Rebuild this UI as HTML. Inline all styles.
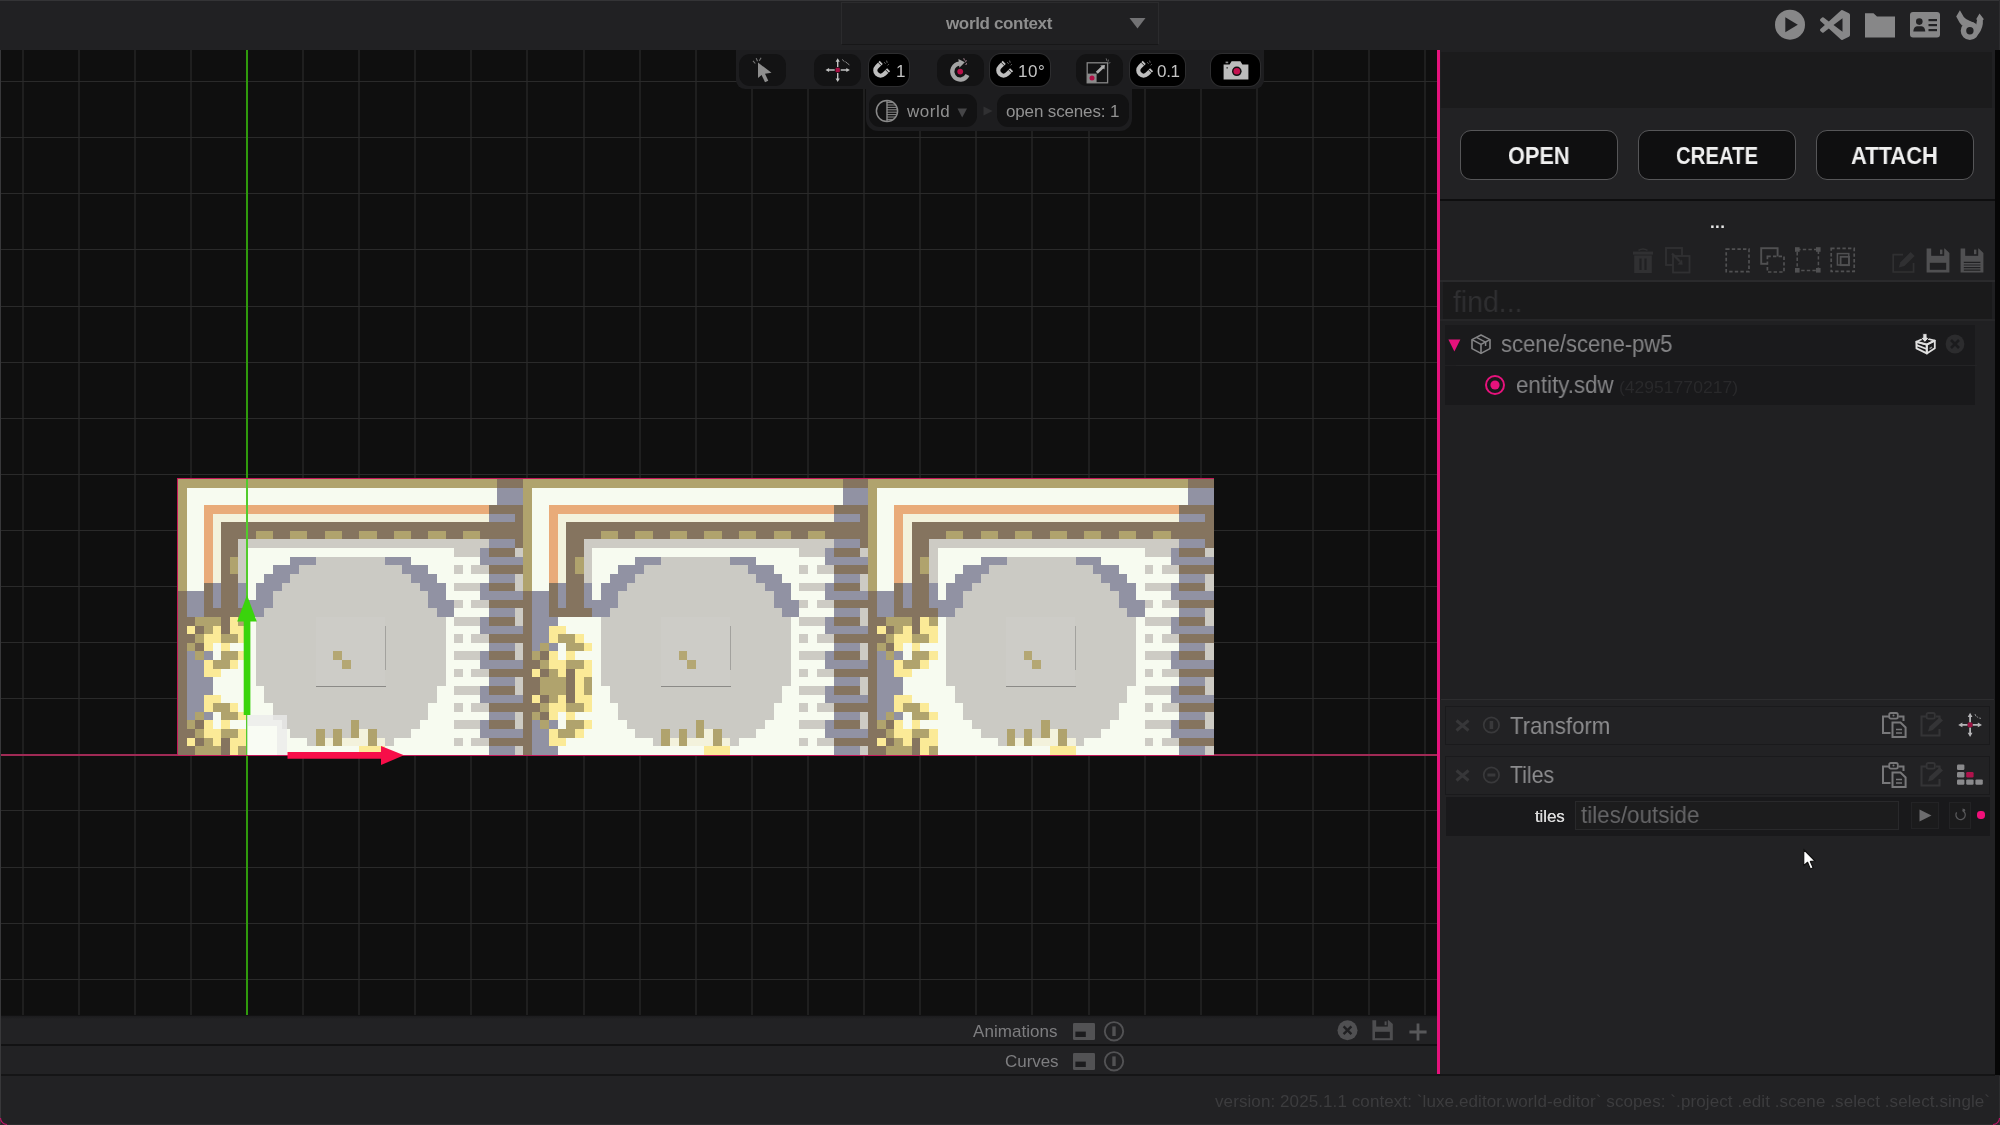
<!DOCTYPE html>
<html><head><meta charset="utf-8"><title>world editor</title>
<style>
html,body{margin:0;padding:0}
body{width:2000px;height:1125px;overflow:hidden;background:#202022;position:relative;
 font-family:"Liberation Sans",sans-serif;color:#8c8c8c}
.a{position:absolute}
.t{position:absolute;white-space:nowrap;line-height:1;will-change:transform}
svg{position:absolute;overflow:visible}
#top{left:0;top:0;width:2000px;height:50px;background:#212123;border-top:1px solid #343436;box-sizing:border-box}
#vp{left:0;top:50px;width:1437px;height:965px;background:#0f0f0f;overflow:hidden}
#vp .gv{position:absolute;top:0;width:2px;height:965px;background:#1f1f1f}
#vp .gh{position:absolute;left:0;height:1px;width:1437px;background:#2a2a2a}
.tb{position:absolute;top:54px;height:32px;border-radius:11px;background:#131314}
.tb.k{background:#000;box-shadow:0 0 0 1px #2d2d2f}
.pill{position:absolute;top:94px;height:33px;border-radius:11px;background:#121213}
.btn{position:absolute;top:130px;height:50px;width:158px;box-sizing:border-box;border:1px solid #565658;border-radius:11px;background:#0f0f10;
 color:#f2f2f2;font-weight:bold;font-size:22px;text-align:center;line-height:49px;letter-spacing:-0.2px}
.hdr{position:absolute;left:1445px;width:545px;height:39px;background:#222224;box-sizing:border-box;border:1px solid #1a1a1c}

</style></head>
<body>
<div id="top" class="a"></div>
<div class="a" style="left:841px;top:2px;width:318px;height:43px;box-sizing:border-box;border:1px solid #2b2b2d;border-bottom-color:#171718;background:#202022"></div>
<div class="t" style="left:946px;top:15px;font-size:17px;color:#8e8e8e;font-weight:bold;letter-spacing:-0.35px">world context</div>
<svg style="left:1129px;top:18px" width="17" height="11" viewBox="0 0 17 11"><path d="M0.5 0H16.5L8.5 10.5Z" fill="#727274"/></svg>
<svg style="left:1774px;top:9px" width="32" height="32" viewBox="0 0 32 32" ><circle cx="16" cy="15.7" r="15" fill="#878788"/><path d="M11.3 8.2V23.2L23.8 15.7Z" fill="#212123"/></svg>
<svg style="left:1820px;top:10px" width="30" height="30" viewBox="0 0 24 24" ><path d="M23.15 2.587L18.21.21a1.494 1.494 0 0 0-1.705.29l-9.46 8.63-4.12-3.128a.999.999 0 0 0-1.276.057L.327 7.261A1 1 0 0 0 .326 8.74L3.899 12 .326 15.26a1 1 0 0 0 .001 1.479L1.65 17.94a.999.999 0 0 0 1.276.057l4.12-3.128 9.46 8.63a1.492 1.492 0 0 0 1.704.29l4.942-2.377A1.5 1.5 0 0 0 24 20.06V3.939a1.5 1.5 0 0 0-.85-1.352zm-5.146 14.861L10.826 12l7.178-5.448v10.896z" fill="#878788"/></svg>
<svg style="left:1865px;top:12px" width="30" height="26" viewBox="0 0 30 26" ><path d="M0 1.2H8.5L12 4.5H30V25.5H0Z" fill="#878788"/></svg>
<svg style="left:1910px;top:12px" width="30" height="26" viewBox="0 0 30 26" ><rect x="0" y="0" width="30" height="25.5" rx="3" fill="#878788"/><circle cx="9.3" cy="9.6" r="3.3" fill="#212123"/><path d="M3.3 19.6Q3.6 14.6 7 14.2H11.6Q15 14.6 15.3 19.6Z" fill="#212123"/><rect x="18.5" y="7" width="8.5" height="2.2" fill="#212123"/><rect x="18.5" y="12" width="8.5" height="2.2" fill="#212123"/><rect x="18.5" y="17" width="8.5" height="2.2" fill="#212123"/></svg>
<svg style="left:1945px;top:5px" width="50" height="40" viewBox="0 0 50 40" ><circle cx="24.9" cy="25.8" r="6.45" fill="none" stroke="#878788" stroke-width="5.5"/><path d="M14.9 5.3L18.8 12.1Q21 15 25.5 16.2L31.3 19.2L27 21L17 20.5L14.5 17.5L11.2 11.4Z" fill="#878788"/><path d="M32.1 14.4L31 14.4L34.5 8.5L38.9 14.3L37.9 14.9Q38.4 22.5 33.6 29L29.5 23Q31.6 21 31.3 19.2Z" fill="#878788"/></svg>
<div id="vp" class="a">
<div class="gv" style="left:22px"></div>
<div class="gv" style="left:78px"></div>
<div class="gv" style="left:134px"></div>
<div class="gv" style="left:190px"></div>
<div class="gv" style="left:302px"></div>
<div class="gv" style="left:358px"></div>
<div class="gv" style="left:414px"></div>
<div class="gv" style="left:470px"></div>
<div class="gv" style="left:526px"></div>
<div class="gv" style="left:583px"></div>
<div class="gv" style="left:639px"></div>
<div class="gv" style="left:695px"></div>
<div class="gv" style="left:751px"></div>
<div class="gv" style="left:807px"></div>
<div class="gv" style="left:863px"></div>
<div class="gv" style="left:919px"></div>
<div class="gv" style="left:975px"></div>
<div class="gv" style="left:1031px"></div>
<div class="gv" style="left:1088px"></div>
<div class="gv" style="left:1144px"></div>
<div class="gv" style="left:1200px"></div>
<div class="gv" style="left:1256px"></div>
<div class="gv" style="left:1312px"></div>
<div class="gv" style="left:1368px"></div>
<div class="gv" style="left:1424px"></div>
<div class="gh" style="top:929px"></div>
<div class="gh" style="top:873px"></div>
<div class="gh" style="top:817px"></div>
<div class="gh" style="top:760px"></div>
<div class="gh" style="top:648px"></div>
<div class="gh" style="top:592px"></div>
<div class="gh" style="top:536px"></div>
<div class="gh" style="top:480px"></div>
<div class="gh" style="top:424px"></div>
<div class="gh" style="top:368px"></div>
<div class="gh" style="top:312px"></div>
<div class="gh" style="top:256px"></div>
<div class="gh" style="top:199px"></div>
<div class="gh" style="top:143px"></div>
<div class="gh" style="top:87px"></div>
<div class="gh" style="top:31px"></div>
<div class="a" style="left:246px;top:0;width:2px;height:965px;background:#2f9a0c"></div>
<div class="a" style="left:0;top:704px;width:1437px;height:2px;background:#a02a55"></div>
</div>
<div class="a" style="left:177px;top:478px;width:1037px;height:278px;background:#c4175a"></div>
<svg class="tilemap" style="position:absolute;left:178px;top:479px" width="1035.7" height="276" viewBox="0 0 1035.7 276" shape-rendering="crispEdges">
<path fill="#b0a36d" d="M0 0H319.34V8.62H0ZM345.23 0H664.57V8.62H345.23ZM690.47 0H1009.81V8.62H690.47ZM0 8.62H8.63V112.12H0ZM345.23 8.62H353.86V112.12H345.23ZM690.47 8.62H699.1V112.12H690.47ZM77.68 51.75H94.94V60.38H77.68ZM112.2 51.75H129.46V60.38H112.2ZM146.72 51.75H163.99V60.38H146.72ZM181.25 51.75H198.51V60.38H181.25ZM215.77 51.75H233.03V60.38H215.77ZM250.29 51.75H267.56V60.38H250.29ZM284.82 51.75H302.08V60.38H284.82ZM422.91 51.75H440.17V60.38H422.91ZM457.43 51.75H474.7V60.38H457.43ZM491.96 51.75H509.22V60.38H491.96ZM526.48 51.75H543.74V60.38H526.48ZM561 51.75H578.27V60.38H561ZM595.53 51.75H612.79V60.38H595.53ZM630.05 51.75H647.31V60.38H630.05ZM768.14 51.75H785.41V60.38H768.14ZM802.67 51.75H819.93V60.38H802.67ZM837.19 51.75H854.45V60.38H837.19ZM871.71 51.75H888.98V60.38H871.71ZM906.24 51.75H923.5V60.38H906.24ZM940.76 51.75H958.02V60.38H940.76ZM975.28 51.75H992.55V60.38H975.28ZM51.78 77.62H60.42V94.88H51.78ZM397.02 77.62H405.65V94.88H397.02ZM742.25 77.62H750.88V94.88H742.25ZM17.26 138H43.15V146.62H17.26ZM17.26 267.38H43.15V276H17.26ZM60.42 138H69.05V146.62H60.42ZM60.42 267.38H69.05V276H60.42ZM707.73 138H733.62V146.62H707.73ZM707.73 267.38H733.62V276H707.73ZM750.88 138H759.51V146.62H750.88ZM750.88 267.38H759.51V276H750.88ZM25.89 146.62H34.52V155.25H25.89ZM25.89 258.75H34.52V267.38H25.89ZM716.36 146.62H724.99V155.25H716.36ZM716.36 258.75H724.99V267.38H716.36ZM17.26 155.25H25.89V163.88H17.26ZM17.26 172.5H25.89V181.12H17.26ZM17.26 232.88H25.89V241.5H17.26ZM17.26 250.12H25.89V258.75H17.26ZM43.15 155.25H60.42V163.88H43.15ZM43.15 172.5H60.42V181.12H43.15ZM43.15 232.88H60.42V241.5H43.15ZM43.15 250.12H60.42V258.75H43.15ZM379.76 155.25H397.02V163.88H379.76ZM379.76 250.12H397.02V258.75H379.76ZM707.73 155.25H716.36V163.88H707.73ZM707.73 172.5H716.36V181.12H707.73ZM707.73 232.88H716.36V241.5H707.73ZM707.73 250.12H716.36V258.75H707.73ZM733.62 155.25H750.88V163.88H733.62ZM733.62 172.5H750.88V181.12H733.62ZM733.62 232.88H750.88V241.5H733.62ZM733.62 250.12H750.88V258.75H733.62ZM8.63 163.88H17.26V172.5H8.63ZM8.63 241.5H17.26V250.12H8.63ZM362.5 163.88H371.13V172.5H362.5ZM362.5 181.12H371.13V189.75H362.5ZM362.5 224.25H371.13V232.88H362.5ZM362.5 241.5H371.13V250.12H362.5ZM388.39 163.88H405.65V172.5H388.39ZM388.39 181.12H405.65V189.75H388.39ZM388.39 224.25H405.65V232.88H388.39ZM388.39 241.5H405.65V250.12H388.39ZM699.1 163.88H707.73V172.5H699.1ZM699.1 241.5H707.73V250.12H699.1ZM155.35 172.5H163.99V181.12H155.35ZM155.35 250.12H163.99V267.38H155.35ZM353.86 172.5H362.5V181.12H353.86ZM353.86 232.88H362.5V241.5H353.86ZM500.59 172.5H509.22V181.12H500.59ZM500.59 250.12H509.22V267.38H500.59ZM845.82 172.5H854.45V181.12H845.82ZM845.82 250.12H854.45V267.38H845.82ZM34.52 181.12H51.78V189.75H34.52ZM34.52 224.25H51.78V232.88H34.52ZM163.99 181.12H172.62V189.75H163.99ZM509.22 181.12H517.85V189.75H509.22ZM724.99 181.12H742.25V189.75H724.99ZM724.99 224.25H742.25V232.88H724.99ZM854.45 181.12H863.08V189.75H854.45ZM371.13 189.75H379.76V198.38H371.13ZM371.13 215.62H379.76V224.25H371.13ZM362.5 198.38H388.39V215.62H362.5ZM405.65 198.38H414.28V215.62H405.65ZM172.62 241.5H181.25V258.75H172.62ZM517.85 241.5H526.48V258.75H517.85ZM863.08 241.5H871.71V258.75H863.08ZM138.09 250.12H146.72V267.38H138.09ZM189.88 250.12H198.51V267.38H189.88ZM483.33 250.12H491.96V267.38H483.33ZM535.11 250.12H543.74V267.38H535.11ZM828.56 250.12H837.19V267.38H828.56ZM880.35 250.12H888.98V267.38H880.35Z"/>
<path fill="#85745f" d="M319.34 0H345.23V8.62H319.34ZM664.57 0H690.47V8.62H664.57ZM1009.81 0H1035.7V8.62H1009.81ZM310.71 25.88H345.23V34.5H310.71ZM310.71 86.25H345.23V94.88H310.71ZM655.94 25.88H690.47V34.5H655.94ZM655.94 86.25H690.47V94.88H655.94ZM1001.18 25.88H1035.7V34.5H1001.18ZM1001.18 86.25H1035.7V94.88H1001.18ZM1001.18 120.75H1035.7V129.38H1001.18ZM1001.18 155.25H1035.7V163.88H1001.18ZM1001.18 189.75H1035.7V198.38H1001.18ZM1001.18 224.25H1035.7V232.88H1001.18ZM1001.18 258.75H1035.7V267.38H1001.18ZM336.6 34.5H345.23V43.12H336.6ZM336.6 60.38H345.23V69H336.6ZM681.84 34.5H690.47V43.12H681.84ZM681.84 60.38H690.47V69H681.84ZM1027.07 34.5H1035.7V43.12H1027.07ZM1027.07 60.38H1035.7V69H1027.07ZM43.15 43.12H345.23V51.75H43.15ZM388.39 43.12H690.47V51.75H388.39ZM733.62 43.12H1035.7V51.75H733.62ZM43.15 51.75H77.68V60.38H43.15ZM94.94 51.75H112.2V60.38H94.94ZM129.46 51.75H146.72V60.38H129.46ZM163.99 51.75H181.25V60.38H163.99ZM198.51 51.75H215.77V60.38H198.51ZM233.03 51.75H250.29V60.38H233.03ZM267.56 51.75H284.82V60.38H267.56ZM302.08 51.75H345.23V60.38H302.08ZM388.39 51.75H422.91V60.38H388.39ZM440.17 51.75H457.43V60.38H440.17ZM474.7 51.75H491.96V60.38H474.7ZM509.22 51.75H526.48V60.38H509.22ZM543.74 51.75H561V60.38H543.74ZM578.27 51.75H595.53V60.38H578.27ZM612.79 51.75H630.05V60.38H612.79ZM647.31 51.75H690.47V60.38H647.31ZM733.62 51.75H768.14V60.38H733.62ZM785.41 51.75H802.67V60.38H785.41ZM819.93 51.75H837.19V60.38H819.93ZM854.45 51.75H871.71V60.38H854.45ZM888.98 51.75H906.24V60.38H888.98ZM923.5 51.75H940.76V60.38H923.5ZM958.02 51.75H975.28V60.38H958.02ZM992.55 51.75H1035.7V60.38H992.55ZM43.15 60.38H60.42V77.62H43.15ZM43.15 94.88H60.42V129.38H43.15ZM388.39 60.38H405.65V77.62H388.39ZM388.39 94.88H405.65V129.38H388.39ZM733.62 60.38H750.88V77.62H733.62ZM733.62 94.88H750.88V129.38H733.62ZM310.71 69H336.6V77.62H310.71ZM310.71 103.5H336.6V112.12H310.71ZM310.71 138H336.6V146.62H310.71ZM310.71 172.5H336.6V181.12H310.71ZM310.71 207H336.6V215.62H310.71ZM310.71 241.5H336.6V250.12H310.71ZM655.94 69H681.84V77.62H655.94ZM655.94 103.5H681.84V112.12H655.94ZM655.94 138H681.84V146.62H655.94ZM655.94 172.5H681.84V181.12H655.94ZM655.94 207H681.84V215.62H655.94ZM655.94 241.5H681.84V250.12H655.94ZM1001.18 69H1027.07V77.62H1001.18ZM1001.18 103.5H1027.07V112.12H1001.18ZM1001.18 138H1027.07V146.62H1001.18ZM1001.18 172.5H1027.07V181.12H1001.18ZM1001.18 207H1027.07V215.62H1001.18ZM1001.18 241.5H1027.07V250.12H1001.18ZM43.15 77.62H51.78V94.88H43.15ZM43.15 138H51.78V155.25H43.15ZM43.15 258.75H51.78V276H43.15ZM388.39 77.62H397.02V94.88H388.39ZM388.39 189.75H397.02V224.25H388.39ZM733.62 77.62H742.25V94.88H733.62ZM733.62 138H742.25V155.25H733.62ZM733.62 258.75H742.25V276H733.62ZM25.89 103.5H34.52V129.38H25.89ZM371.13 103.5H379.76V129.38H371.13ZM716.36 103.5H724.99V129.38H716.36ZM0 112.12H8.63V138H0ZM0 146.62H8.63V155.25H0ZM0 163.88H8.63V250.12H0ZM0 258.75H8.63V267.38H0ZM345.23 112.12H353.86V120.75H345.23ZM345.23 129.38H353.86V155.25H345.23ZM345.23 163.88H353.86V181.12H345.23ZM345.23 215.62H353.86V224.25H345.23ZM345.23 232.88H353.86V258.75H345.23ZM345.23 267.38H353.86V276H345.23ZM690.47 112.12H699.1V120.75H690.47ZM690.47 129.38H699.1V138H690.47ZM690.47 146.62H699.1V155.25H690.47ZM690.47 163.88H699.1V189.75H690.47ZM690.47 198.38H699.1V224.25H690.47ZM690.47 232.88H699.1V250.12H690.47ZM310.71 120.75H353.86V129.38H310.71ZM310.71 155.25H353.86V163.88H310.71ZM310.71 189.75H353.86V198.38H310.71ZM310.71 258.75H353.86V267.38H310.71ZM655.94 120.75H699.1V129.38H655.94ZM655.94 189.75H699.1V198.38H655.94ZM655.94 224.25H699.1V232.88H655.94ZM655.94 258.75H699.1V267.38H655.94ZM25.89 129.38H69.05V138H25.89ZM371.13 129.38H414.28V138H371.13ZM716.36 129.38H759.51V138H716.36ZM0 138H17.26V146.62H0ZM0 155.25H17.26V163.88H0ZM0 250.12H17.26V258.75H0ZM0 267.38H17.26V276H0ZM690.47 138H707.73V146.62H690.47ZM690.47 250.12H707.73V258.75H690.47ZM690.47 267.38H707.73V276H690.47ZM17.26 146.62H25.89V155.25H17.26ZM17.26 163.88H25.89V172.5H17.26ZM17.26 241.5H25.89V250.12H17.26ZM17.26 258.75H25.89V267.38H17.26ZM707.73 146.62H716.36V155.25H707.73ZM707.73 163.88H716.36V172.5H707.73ZM707.73 241.5H716.36V250.12H707.73ZM707.73 258.75H716.36V267.38H707.73ZM655.94 155.25H707.73V163.88H655.94ZM362.5 172.5H371.13V181.12H362.5ZM362.5 189.75H371.13V198.38H362.5ZM362.5 215.62H371.13V224.25H362.5ZM362.5 232.88H371.13V241.5H362.5ZM345.23 181.12H362.5V189.75H345.23ZM345.23 198.38H362.5V215.62H345.23ZM310.71 224.25H362.5V232.88H310.71Z"/>
<path fill="#f7fbf0" d="M8.63 8.62H319.34V25.88H8.63ZM353.86 8.62H664.57V25.88H353.86ZM699.1 8.62H1009.81V25.88H699.1ZM8.63 25.88H25.89V112.12H8.63ZM353.86 25.88H371.13V112.12H353.86ZM699.1 25.88H716.36V112.12H699.1ZM69.05 69H276.19V77.62H69.05ZM414.28 69H621.42V77.62H414.28ZM759.51 69H966.65V77.62H759.51ZM69.05 77.62H112.2V86.25H69.05ZM69.05 250.12H112.2V258.75H69.05ZM233.03 77.62H302.08V86.25H233.03ZM233.03 250.12H302.08V258.75H233.03ZM414.28 77.62H457.43V86.25H414.28ZM578.27 77.62H647.31V86.25H578.27ZM578.27 250.12H647.31V258.75H578.27ZM759.51 77.62H802.67V86.25H759.51ZM759.51 250.12H802.67V258.75H759.51ZM923.5 77.62H992.55V86.25H923.5ZM923.5 250.12H992.55V258.75H923.5ZM69.05 86.25H94.94V94.88H69.05ZM69.05 232.88H94.94V241.5H69.05ZM250.29 86.25H276.19V94.88H250.29ZM250.29 224.25H276.19V232.88H250.29ZM284.82 86.25H293.45V94.88H284.82ZM284.82 120.75H293.45V129.38H284.82ZM284.82 155.25H293.45V163.88H284.82ZM284.82 189.75H293.45V198.38H284.82ZM284.82 224.25H293.45V232.88H284.82ZM284.82 258.75H293.45V267.38H284.82ZM414.28 86.25H440.17V94.88H414.28ZM414.28 224.25H440.17V232.88H414.28ZM595.53 86.25H621.42V94.88H595.53ZM595.53 224.25H621.42V232.88H595.53ZM630.05 86.25H638.68V94.88H630.05ZM630.05 120.75H638.68V129.38H630.05ZM630.05 155.25H638.68V163.88H630.05ZM630.05 189.75H638.68V198.38H630.05ZM630.05 224.25H638.68V232.88H630.05ZM630.05 258.75H638.68V267.38H630.05ZM759.51 86.25H785.41V94.88H759.51ZM759.51 232.88H785.41V241.5H759.51ZM940.76 86.25H966.65V94.88H940.76ZM940.76 224.25H966.65V232.88H940.76ZM975.28 86.25H983.91V94.88H975.28ZM975.28 120.75H983.91V129.38H975.28ZM975.28 155.25H983.91V163.88H975.28ZM975.28 189.75H983.91V198.38H975.28ZM975.28 224.25H983.91V232.88H975.28ZM975.28 258.75H983.91V267.38H975.28ZM69.05 94.88H86.31V103.5H69.05ZM258.93 94.88H310.71V103.5H258.93ZM414.28 94.88H431.54V103.5H414.28ZM414.28 207H431.54V224.25H414.28ZM604.16 94.88H655.94V103.5H604.16ZM759.51 94.88H776.77V103.5H759.51ZM949.39 94.88H1001.18V103.5H949.39ZM69.05 103.5H77.68V120.75H69.05ZM69.05 138H77.68V163.88H69.05ZM69.05 172.5H77.68V181.12H69.05ZM267.56 103.5H276.19V112.12H267.56ZM267.56 138H276.19V146.62H267.56ZM267.56 155.25H276.19V163.88H267.56ZM267.56 172.5H276.19V181.12H267.56ZM267.56 189.75H276.19V198.38H267.56ZM414.28 103.5H422.91V120.75H414.28ZM414.28 163.88H422.91V172.5H414.28ZM414.28 181.12H422.91V207H414.28ZM612.79 103.5H621.42V112.12H612.79ZM612.79 138H621.42V146.62H612.79ZM612.79 155.25H621.42V163.88H612.79ZM612.79 172.5H621.42V181.12H612.79ZM612.79 189.75H621.42V198.38H612.79ZM759.51 103.5H768.14V120.75H759.51ZM759.51 138H768.14V163.88H759.51ZM759.51 172.5H768.14V181.12H759.51ZM958.02 103.5H966.65V112.12H958.02ZM958.02 138H966.65V146.62H958.02ZM958.02 155.25H966.65V163.88H958.02ZM958.02 172.5H966.65V181.12H958.02ZM958.02 189.75H966.65V198.38H958.02ZM267.56 112.12H302.08V120.75H267.56ZM267.56 146.62H302.08V155.25H267.56ZM267.56 181.12H302.08V189.75H267.56ZM612.79 112.12H647.31V120.75H612.79ZM612.79 146.62H647.31V155.25H612.79ZM612.79 181.12H647.31V189.75H612.79ZM958.02 112.12H992.55V120.75H958.02ZM958.02 146.62H992.55V155.25H958.02ZM958.02 181.12H992.55V189.75H958.02ZM276.19 129.38H310.71V138H276.19ZM621.42 129.38H655.94V138H621.42ZM966.65 129.38H1001.18V138H966.65ZM379.76 138H422.91V146.62H379.76ZM388.39 146.62H422.91V155.25H388.39ZM405.65 155.25H422.91V163.88H405.65ZM34.52 163.88H43.15V181.12H34.52ZM34.52 232.88H43.15V250.12H34.52ZM51.78 163.88H77.68V172.5H51.78ZM267.56 163.88H310.71V172.5H267.56ZM267.56 198.38H310.71V207H267.56ZM379.76 163.88H388.39V181.12H379.76ZM379.76 232.88H388.39V250.12H379.76ZM612.79 163.88H655.94V172.5H612.79ZM612.79 198.38H655.94V207H612.79ZM724.99 163.88H733.62V181.12H724.99ZM724.99 232.88H733.62V250.12H724.99ZM742.25 163.88H768.14V172.5H742.25ZM958.02 163.88H1001.18V172.5H958.02ZM958.02 198.38H1001.18V207H958.02ZM397.02 172.5H422.91V181.12H397.02ZM60.42 181.12H77.68V189.75H60.42ZM750.88 181.12H768.14V189.75H750.88ZM43.15 189.75H77.68V198.38H43.15ZM733.62 189.75H768.14V198.38H733.62ZM34.52 198.38H77.68V207H34.52ZM724.99 198.38H768.14V207H724.99ZM34.52 207H86.31V215.62H34.52ZM258.93 207H276.19V215.62H258.93ZM604.16 207H621.42V215.62H604.16ZM724.99 207H776.77V215.62H724.99ZM949.39 207H966.65V215.62H949.39ZM43.15 215.62H86.31V224.25H43.15ZM258.93 215.62H302.08V224.25H258.93ZM604.16 215.62H647.31V224.25H604.16ZM733.62 215.62H776.77V224.25H733.62ZM949.39 215.62H992.55V224.25H949.39ZM60.42 224.25H94.94V232.88H60.42ZM750.88 224.25H785.41V232.88H750.88ZM250.29 232.88H310.71V241.5H250.29ZM397.02 232.88H440.17V241.5H397.02ZM595.53 232.88H655.94V241.5H595.53ZM940.76 232.88H1001.18V241.5H940.76ZM51.78 241.5H103.57V250.12H51.78ZM241.66 241.5H276.19V250.12H241.66ZM414.28 241.5H448.8V250.12H414.28ZM586.9 241.5H621.42V250.12H586.9ZM742.25 241.5H794.04V250.12H742.25ZM932.13 241.5H966.65V250.12H932.13ZM405.65 250.12H457.43V258.75H405.65ZM69.05 258.75H129.46V267.38H69.05ZM215.77 258.75H276.19V267.38H215.77ZM388.39 258.75H474.7V267.38H388.39ZM561 258.75H621.42V267.38H561ZM759.51 258.75H819.93V267.38H759.51ZM906.24 258.75H966.65V267.38H906.24ZM69.05 267.38H181.25V276H69.05ZM207.14 267.38H310.71V276H207.14ZM379.76 267.38H526.48V276H379.76ZM552.37 267.38H655.94V276H552.37ZM759.51 267.38H871.71V276H759.51ZM897.61 267.38H1001.18V276H897.61Z"/>
<path fill="#9192a3" d="M319.34 8.62H345.23V25.88H319.34ZM664.57 8.62H690.47V25.88H664.57ZM1009.81 8.62H1035.7V25.88H1009.81ZM310.71 34.5H336.6V43.12H310.71ZM310.71 60.38H336.6V69H310.71ZM310.71 94.88H336.6V103.5H310.71ZM310.71 129.38H336.6V138H310.71ZM310.71 163.88H336.6V172.5H310.71ZM310.71 198.38H336.6V207H310.71ZM310.71 232.88H336.6V241.5H310.71ZM310.71 267.38H336.6V276H310.71ZM655.94 34.5H681.84V43.12H655.94ZM655.94 60.38H681.84V69H655.94ZM655.94 94.88H681.84V103.5H655.94ZM655.94 129.38H681.84V138H655.94ZM655.94 163.88H681.84V172.5H655.94ZM655.94 198.38H681.84V207H655.94ZM655.94 232.88H681.84V241.5H655.94ZM655.94 267.38H681.84V276H655.94ZM1001.18 34.5H1027.07V43.12H1001.18ZM1001.18 60.38H1027.07V69H1001.18ZM1001.18 94.88H1027.07V103.5H1001.18ZM1001.18 129.38H1027.07V138H1001.18ZM1001.18 163.88H1027.07V172.5H1001.18ZM1001.18 198.38H1027.07V207H1001.18ZM1001.18 232.88H1027.07V241.5H1001.18ZM1001.18 267.38H1027.07V276H1001.18ZM302.08 69H310.71V77.62H302.08ZM302.08 103.5H310.71V112.12H302.08ZM302.08 138H310.71V146.62H302.08ZM302.08 172.5H310.71V181.12H302.08ZM302.08 207H310.71V215.62H302.08ZM302.08 241.5H310.71V250.12H302.08ZM647.31 69H655.94V77.62H647.31ZM647.31 103.5H655.94V112.12H647.31ZM647.31 138H655.94V146.62H647.31ZM647.31 172.5H655.94V181.12H647.31ZM647.31 207H655.94V215.62H647.31ZM647.31 241.5H655.94V250.12H647.31ZM992.55 69H1001.18V77.62H992.55ZM992.55 103.5H1001.18V112.12H992.55ZM992.55 138H1001.18V146.62H992.55ZM992.55 172.5H1001.18V181.12H992.55ZM992.55 207H1001.18V215.62H992.55ZM992.55 241.5H1001.18V250.12H992.55ZM112.2 77.62H138.09V86.25H112.2ZM207.14 77.62H233.03V86.25H207.14ZM302.08 77.62H345.23V86.25H302.08ZM302.08 112.12H345.23V120.75H302.08ZM302.08 146.62H345.23V155.25H302.08ZM302.08 181.12H345.23V189.75H302.08ZM302.08 215.62H345.23V224.25H302.08ZM302.08 250.12H345.23V258.75H302.08ZM457.43 77.62H483.33V86.25H457.43ZM552.37 77.62H578.27V86.25H552.37ZM647.31 77.62H690.47V86.25H647.31ZM647.31 112.12H690.47V120.75H647.31ZM647.31 146.62H690.47V155.25H647.31ZM647.31 181.12H690.47V189.75H647.31ZM647.31 215.62H690.47V224.25H647.31ZM647.31 250.12H690.47V258.75H647.31ZM802.67 77.62H828.56V86.25H802.67ZM897.61 77.62H923.5V86.25H897.61ZM992.55 77.62H1035.7V86.25H992.55ZM992.55 112.12H1035.7V120.75H992.55ZM992.55 146.62H1035.7V155.25H992.55ZM992.55 181.12H1035.7V189.75H992.55ZM992.55 215.62H1035.7V224.25H992.55ZM992.55 250.12H1035.7V258.75H992.55ZM94.94 86.25H120.83V94.88H94.94ZM224.4 86.25H250.29V94.88H224.4ZM440.17 86.25H466.06V94.88H440.17ZM569.63 86.25H595.53V94.88H569.63ZM785.41 86.25H811.3V94.88H785.41ZM914.87 86.25H940.76V94.88H914.87ZM86.31 94.88H112.2V103.5H86.31ZM233.03 94.88H258.93V103.5H233.03ZM431.54 94.88H457.43V103.5H431.54ZM578.27 94.88H604.16V103.5H578.27ZM776.77 94.88H802.67V103.5H776.77ZM923.5 94.88H949.39V103.5H923.5ZM34.52 103.5H43.15V129.38H34.52ZM60.42 103.5H69.05V120.75H60.42ZM77.68 103.5H103.57V112.12H77.68ZM241.66 103.5H267.56V112.12H241.66ZM379.76 103.5H388.39V129.38H379.76ZM405.65 103.5H414.28V120.75H405.65ZM422.91 103.5H448.8V112.12H422.91ZM586.9 103.5H612.79V112.12H586.9ZM724.99 103.5H733.62V129.38H724.99ZM750.88 103.5H759.51V120.75H750.88ZM768.14 103.5H794.04V112.12H768.14ZM932.13 103.5H958.02V112.12H932.13ZM8.63 112.12H25.89V138H8.63ZM8.63 181.12H25.89V198.38H8.63ZM8.63 215.62H25.89V232.88H8.63ZM77.68 112.12H94.94V120.75H77.68ZM250.29 112.12H267.56V120.75H250.29ZM353.86 112.12H371.13V138H353.86ZM353.86 146.62H371.13V163.88H353.86ZM353.86 250.12H371.13V267.38H353.86ZM422.91 112.12H440.17V120.75H422.91ZM595.53 112.12H612.79V120.75H595.53ZM699.1 112.12H716.36V138H699.1ZM699.1 181.12H716.36V198.38H699.1ZM699.1 215.62H716.36V232.88H699.1ZM768.14 112.12H785.41V120.75H768.14ZM940.76 112.12H958.02V120.75H940.76ZM60.42 120.75H94.94V129.38H60.42ZM250.29 120.75H276.19V129.38H250.29ZM405.65 120.75H440.17V129.38H405.65ZM595.53 120.75H621.42V129.38H595.53ZM750.88 120.75H785.41V129.38H750.88ZM940.76 120.75H966.65V129.38H940.76ZM69.05 129.38H86.31V138H69.05ZM258.93 129.38H276.19V138H258.93ZM414.28 129.38H431.54V138H414.28ZM604.16 129.38H621.42V138H604.16ZM759.51 129.38H776.77V138H759.51ZM949.39 129.38H966.65V138H949.39ZM353.86 138H379.76V146.62H353.86ZM353.86 267.38H379.76V276H353.86ZM353.86 163.88H362.5V172.5H353.86ZM353.86 241.5H362.5V250.12H353.86ZM371.13 163.88H379.76V172.5H371.13ZM371.13 241.5H379.76V250.12H371.13ZM8.63 172.5H17.26V181.12H8.63ZM8.63 232.88H17.26V241.5H8.63ZM25.89 172.5H34.52V181.12H25.89ZM25.89 232.88H34.52V241.5H25.89ZM699.1 172.5H707.73V181.12H699.1ZM699.1 232.88H707.73V241.5H699.1ZM716.36 172.5H724.99V181.12H716.36ZM716.36 232.88H724.99V241.5H716.36ZM8.63 198.38H34.52V215.62H8.63ZM699.1 198.38H724.99V215.62H699.1Z"/>
<path fill="#e9ab79" d="M25.89 25.88H310.71V34.5H25.89ZM371.13 25.88H655.94V34.5H371.13ZM716.36 25.88H1001.18V34.5H716.36ZM25.89 34.5H34.52V103.5H25.89ZM371.13 34.5H379.76V103.5H371.13ZM716.36 34.5H724.99V103.5H716.36Z"/>
<path fill="#f3f2dc" d="M34.52 34.5H310.71V43.12H34.52ZM379.76 34.5H655.94V43.12H379.76ZM724.99 34.5H1001.18V43.12H724.99ZM34.52 43.12H43.15V103.5H34.52ZM379.76 43.12H388.39V103.5H379.76ZM724.99 43.12H733.62V103.5H724.99ZM181.25 250.12H189.88V258.75H181.25ZM526.48 250.12H535.11V258.75H526.48ZM871.71 250.12H880.35V258.75H871.71ZM146.72 258.75H155.35V267.38H146.72ZM163.99 258.75H189.88V267.38H163.99ZM198.51 258.75H207.14V267.38H198.51ZM491.96 258.75H500.59V267.38H491.96ZM509.22 258.75H535.11V267.38H509.22ZM543.74 258.75H552.37V267.38H543.74ZM837.19 258.75H845.82V267.38H837.19ZM854.45 258.75H880.35V267.38H854.45ZM888.98 258.75H897.61V267.38H888.98Z"/>
<path fill="#cdcbc4" d="M60.42 60.38H310.71V69H60.42ZM405.65 60.38H655.94V69H405.65ZM750.88 60.38H1001.18V69H750.88ZM60.42 69H69.05V103.5H60.42ZM276.19 69H302.08V77.62H276.19ZM276.19 103.5H302.08V112.12H276.19ZM276.19 138H302.08V146.62H276.19ZM276.19 172.5H302.08V181.12H276.19ZM276.19 207H302.08V215.62H276.19ZM276.19 241.5H302.08V250.12H276.19ZM336.6 69H345.23V77.62H336.6ZM336.6 94.88H345.23V112.12H336.6ZM336.6 129.38H345.23V146.62H336.6ZM336.6 163.88H345.23V181.12H336.6ZM336.6 198.38H345.23V215.62H336.6ZM336.6 232.88H345.23V250.12H336.6ZM336.6 267.38H345.23V276H336.6ZM405.65 69H414.28V103.5H405.65ZM621.42 69H647.31V77.62H621.42ZM621.42 103.5H647.31V112.12H621.42ZM621.42 138H647.31V146.62H621.42ZM621.42 172.5H647.31V181.12H621.42ZM621.42 207H647.31V215.62H621.42ZM621.42 241.5H647.31V250.12H621.42ZM681.84 69H690.47V77.62H681.84ZM681.84 94.88H690.47V112.12H681.84ZM681.84 129.38H690.47V146.62H681.84ZM681.84 163.88H690.47V181.12H681.84ZM681.84 198.38H690.47V215.62H681.84ZM681.84 232.88H690.47V250.12H681.84ZM681.84 267.38H690.47V276H681.84ZM750.88 69H759.51V103.5H750.88ZM966.65 69H992.55V77.62H966.65ZM966.65 103.5H992.55V112.12H966.65ZM966.65 138H992.55V146.62H966.65ZM966.65 172.5H992.55V181.12H966.65ZM966.65 207H992.55V215.62H966.65ZM966.65 241.5H992.55V250.12H966.65ZM1027.07 69H1035.7V77.62H1027.07ZM1027.07 94.88H1035.7V112.12H1027.07ZM1027.07 129.38H1035.7V146.62H1027.07ZM1027.07 163.88H1035.7V181.12H1027.07ZM1027.07 198.38H1035.7V215.62H1027.07ZM1027.07 232.88H1035.7V250.12H1027.07ZM1027.07 267.38H1035.7V276H1027.07ZM276.19 86.25H284.82V94.88H276.19ZM276.19 120.75H284.82V129.38H276.19ZM276.19 155.25H284.82V163.88H276.19ZM276.19 189.75H284.82V198.38H276.19ZM276.19 224.25H284.82V232.88H276.19ZM276.19 258.75H284.82V267.38H276.19ZM293.45 86.25H310.71V94.88H293.45ZM293.45 120.75H310.71V129.38H293.45ZM293.45 155.25H310.71V163.88H293.45ZM293.45 189.75H310.71V198.38H293.45ZM293.45 224.25H310.71V232.88H293.45ZM293.45 258.75H310.71V267.38H293.45ZM621.42 86.25H630.05V94.88H621.42ZM621.42 120.75H630.05V129.38H621.42ZM621.42 155.25H630.05V163.88H621.42ZM621.42 189.75H630.05V198.38H621.42ZM621.42 224.25H630.05V232.88H621.42ZM621.42 258.75H630.05V267.38H621.42ZM638.68 86.25H655.94V94.88H638.68ZM638.68 120.75H655.94V129.38H638.68ZM638.68 155.25H655.94V163.88H638.68ZM638.68 189.75H655.94V198.38H638.68ZM638.68 224.25H655.94V232.88H638.68ZM638.68 258.75H655.94V267.38H638.68ZM966.65 86.25H975.28V94.88H966.65ZM966.65 120.75H975.28V129.38H966.65ZM966.65 155.25H975.28V163.88H966.65ZM966.65 189.75H975.28V198.38H966.65ZM966.65 224.25H975.28V232.88H966.65ZM966.65 258.75H975.28V267.38H966.65ZM983.91 86.25H1001.18V94.88H983.91ZM983.91 120.75H1001.18V129.38H983.91ZM983.91 155.25H1001.18V163.88H983.91ZM983.91 189.75H1001.18V198.38H983.91ZM983.91 224.25H1001.18V232.88H983.91ZM983.91 258.75H1001.18V267.38H983.91Z"/>
<path fill="#cbcac4" d="M138.09 77.62H207.14V86.25H138.09ZM483.33 77.62H552.37V86.25H483.33ZM828.56 77.62H897.61V86.25H828.56ZM120.83 86.25H224.4V94.88H120.83ZM466.06 86.25H569.63V94.88H466.06ZM811.3 86.25H914.87V94.88H811.3ZM112.2 94.88H233.03V103.5H112.2ZM457.43 94.88H578.27V103.5H457.43ZM802.67 94.88H923.5V103.5H802.67ZM103.57 103.5H241.66V112.12H103.57ZM448.8 103.5H586.9V112.12H448.8ZM794.04 103.5H932.13V112.12H794.04ZM94.94 112.12H250.29V129.38H94.94ZM94.94 224.25H250.29V241.5H94.94ZM440.17 112.12H595.53V129.38H440.17ZM440.17 224.25H595.53V241.5H440.17ZM785.41 112.12H940.76V129.38H785.41ZM785.41 224.25H940.76V241.5H785.41ZM86.31 129.38H258.93V138H86.31ZM86.31 207H258.93V224.25H86.31ZM431.54 129.38H604.16V138H431.54ZM431.54 207H604.16V224.25H431.54ZM776.77 129.38H949.39V138H776.77ZM776.77 207H949.39V224.25H776.77ZM77.68 138H267.56V172.5H77.68ZM77.68 189.75H267.56V207H77.68ZM422.91 138H612.79V172.5H422.91ZM422.91 189.75H612.79V207H422.91ZM768.14 138H958.02V172.5H768.14ZM768.14 189.75H958.02V207H768.14ZM77.68 172.5H155.35V181.12H77.68ZM163.99 172.5H267.56V181.12H163.99ZM422.91 172.5H500.59V181.12H422.91ZM509.22 172.5H612.79V181.12H509.22ZM768.14 172.5H845.82V181.12H768.14ZM854.45 172.5H958.02V181.12H854.45ZM77.68 181.12H163.99V189.75H77.68ZM172.62 181.12H267.56V189.75H172.62ZM422.91 181.12H509.22V189.75H422.91ZM517.85 181.12H612.79V189.75H517.85ZM768.14 181.12H854.45V189.75H768.14ZM863.08 181.12H958.02V189.75H863.08ZM103.57 241.5H172.62V250.12H103.57ZM181.25 241.5H241.66V250.12H181.25ZM448.8 241.5H517.85V250.12H448.8ZM526.48 241.5H586.9V250.12H526.48ZM794.04 241.5H863.08V250.12H794.04ZM871.71 241.5H932.13V250.12H871.71ZM112.2 250.12H138.09V258.75H112.2ZM146.72 250.12H155.35V258.75H146.72ZM163.99 250.12H172.62V258.75H163.99ZM198.51 250.12H233.03V258.75H198.51ZM457.43 250.12H483.33V258.75H457.43ZM491.96 250.12H500.59V258.75H491.96ZM509.22 250.12H517.85V258.75H509.22ZM543.74 250.12H578.27V258.75H543.74ZM802.67 250.12H828.56V258.75H802.67ZM837.19 250.12H845.82V258.75H837.19ZM854.45 250.12H863.08V258.75H854.45ZM888.98 250.12H923.5V258.75H888.98ZM129.46 258.75H138.09V267.38H129.46ZM207.14 258.75H215.77V267.38H207.14ZM474.7 258.75H483.33V267.38H474.7ZM552.37 258.75H561V267.38H552.37ZM819.93 258.75H828.56V267.38H819.93ZM897.61 258.75H906.24V267.38H897.61Z"/>
<path fill="#fbea97" d="M51.78 138H60.42V146.62H51.78ZM51.78 181.12H60.42V189.75H51.78ZM51.78 224.25H60.42V232.88H51.78ZM51.78 267.38H60.42V276H51.78ZM742.25 138H750.88V146.62H742.25ZM742.25 181.12H750.88V189.75H742.25ZM742.25 224.25H750.88V232.88H742.25ZM742.25 267.38H750.88V276H742.25ZM8.63 146.62H17.26V155.25H8.63ZM8.63 258.75H17.26V267.38H8.63ZM34.52 146.62H43.15V155.25H34.52ZM34.52 258.75H43.15V267.38H34.52ZM51.78 146.62H69.05V155.25H51.78ZM51.78 258.75H69.05V267.38H51.78ZM371.13 146.62H388.39V155.25H371.13ZM371.13 181.12H388.39V189.75H371.13ZM371.13 224.25H388.39V232.88H371.13ZM371.13 258.75H388.39V267.38H371.13ZM699.1 146.62H707.73V155.25H699.1ZM699.1 258.75H707.73V267.38H699.1ZM724.99 146.62H733.62V155.25H724.99ZM724.99 258.75H733.62V267.38H724.99ZM742.25 146.62H759.51V155.25H742.25ZM742.25 258.75H759.51V267.38H742.25ZM25.89 155.25H43.15V163.88H25.89ZM25.89 189.75H43.15V198.38H25.89ZM25.89 215.62H43.15V224.25H25.89ZM25.89 250.12H43.15V258.75H25.89ZM60.42 155.25H69.05V163.88H60.42ZM60.42 172.5H69.05V181.12H60.42ZM60.42 232.88H69.05V241.5H60.42ZM60.42 250.12H69.05V258.75H60.42ZM371.13 155.25H379.76V163.88H371.13ZM371.13 172.5H379.76V181.12H371.13ZM371.13 232.88H379.76V241.5H371.13ZM371.13 250.12H379.76V258.75H371.13ZM397.02 155.25H405.65V163.88H397.02ZM397.02 198.38H405.65V215.62H397.02ZM397.02 250.12H405.65V258.75H397.02ZM716.36 155.25H733.62V163.88H716.36ZM716.36 189.75H733.62V198.38H716.36ZM716.36 215.62H733.62V224.25H716.36ZM716.36 250.12H733.62V258.75H716.36ZM750.88 155.25H759.51V163.88H750.88ZM750.88 172.5H759.51V181.12H750.88ZM750.88 232.88H759.51V241.5H750.88ZM750.88 250.12H759.51V258.75H750.88ZM25.89 163.88H34.52V172.5H25.89ZM25.89 181.12H34.52V189.75H25.89ZM25.89 224.25H34.52V232.88H25.89ZM25.89 241.5H34.52V250.12H25.89ZM43.15 163.88H51.78V172.5H43.15ZM43.15 241.5H51.78V250.12H43.15ZM405.65 163.88H414.28V172.5H405.65ZM405.65 181.12H414.28V189.75H405.65ZM405.65 224.25H414.28V232.88H405.65ZM405.65 241.5H414.28V250.12H405.65ZM716.36 163.88H724.99V172.5H716.36ZM716.36 181.12H724.99V189.75H716.36ZM716.36 224.25H724.99V232.88H716.36ZM716.36 241.5H724.99V250.12H716.36ZM733.62 163.88H742.25V172.5H733.62ZM733.62 241.5H742.25V250.12H733.62ZM388.39 172.5H397.02V181.12H388.39ZM388.39 232.88H397.02V241.5H388.39ZM353.86 189.75H362.5V198.38H353.86ZM353.86 215.62H362.5V224.25H353.86ZM379.76 189.75H388.39V198.38H379.76ZM379.76 215.62H388.39V224.25H379.76ZM397.02 189.75H414.28V198.38H397.02ZM397.02 215.62H414.28V224.25H397.02ZM181.25 267.38H207.14V276H181.25ZM526.48 267.38H552.37V276H526.48ZM871.71 267.38H897.61V276H871.71Z"/>
</svg>
<div class="a" style="left:316px;top:617px;width:69px;height:69px;background:rgba(255,255,255,0.05)"></div>
<div class="a" style="left:315.5px;top:686px;width:70px;height:1px;background:#8b8a87"></div>
<div class="a" style="left:384.5px;top:626px;width:1px;height:44px;background:#a3a29e"></div>
<div class="a" style="left:661.23px;top:617px;width:69px;height:69px;background:rgba(255,255,255,0.05)"></div>
<div class="a" style="left:660.73px;top:686px;width:70px;height:1px;background:#8b8a87"></div>
<div class="a" style="left:729.73px;top:626px;width:1px;height:44px;background:#a3a29e"></div>
<div class="a" style="left:1006.46px;top:617px;width:69px;height:69px;background:rgba(255,255,255,0.05)"></div>
<div class="a" style="left:1005.96px;top:686px;width:70px;height:1px;background:#8b8a87"></div>
<div class="a" style="left:1074.96px;top:626px;width:1px;height:44px;background:#a3a29e"></div>
<div class="a" style="left:246px;top:479px;width:2px;height:276px;background:#52cc2c"></div>
<div class="a" style="left:247px;top:715px;width:40px;height:40px;background:rgba(235,235,235,0.75)"></div>
<div class="a" style="left:248px;top:726px;width:29px;height:29px;background:rgba(250,253,245,0.9)"></div>
<svg style="left:0;top:0" width="1437" height="1015" viewBox="0 0 1437 1015"><path d="M243.7 715V620H250.4V715Z" fill="#3ad40c"/><path d="M247 595L256.8 621.5H237.2Z" fill="#3ad40c"/><path d="M287.5 752H383V758.7H287.5Z" fill="#f70e49"/><path d="M404 755.3L381 746V765Z" fill="#f70e49"/></svg>
<div class="a" style="left:736px;top:50px;width:528px;height:39px;background:#1d1d1f;border-radius:0 0 9px 9px"></div>
<div class="a" style="left:866px;top:86px;width:266px;height:45px;background:#1d1d1f;border-radius:0 0 12px 12px"></div>
<div class="tb" style="left:739px;width:47px"></div>
<div class="tb" style="left:814px;width:47px"></div>
<div class="tb k" style="left:869px;width:40px"></div>
<div class="tb" style="left:937px;width:47px"></div>
<div class="tb k" style="left:990px;width:60px"></div>
<div class="tb" style="left:1076px;width:47px"></div>
<div class="tb k" style="left:1130px;width:55px"></div>
<div class="tb k" style="left:1211px;width:49px"></div>
<svg style="left:750px;top:58px" width="26" height="26" viewBox="0 0 26 26" ><path d="M8 4.6V20L11.6 17L15 24.3L18.3 22.8L15 15.8L21.5 14.8Z" fill="#8e8e8e"/><path d="M3 2.8L5.3 5.5M6.2 0.1L7.5 3.3M11.1 -0.3L9.3 2.8" stroke="#8e8e8e" stroke-width="1.1" opacity=".8"/></svg>
<svg style="left:824px;top:58px" width="28" height="28" viewBox="0 0 28 28" ><path d="M13.7 0.2L15.8 3.8H14.4V9H13V3.8H11.6Z" fill="#c2c2c2"/><path d="M13.7 24L15.8 20.4H14.4V15H13V20.4H11.6Z" fill="#c2c2c2"/><path d="M1.5 12L5.1 9.9V11.3H10.7V12.7H5.1V14.1Z" fill="#c2c2c2"/><path d="M25.9 12L22.3 9.9V11.3H16.7V12.7H22.3V14.1Z" fill="#c2c2c2"/><rect x="11.5" y="9.8" width="4.4" height="4.4" rx="1" fill="#a60f43"/><path d="M18.2 1.5L20.5 3.7M21.4 3.7L23.6 5.5M23.6 5.5L25.4 6.9" stroke="#c2c2c2" stroke-width="1" opacity=".7"/></svg>
<svg style="left:869.2px;top:58.3px" width="24" height="24" viewBox="0 0 24 24" ><g transform="translate(12 12) rotate(45)"><path d="M-5.2 -5.6V0.6A5.2 5.2 0 0 0 5.2 0.6V-5.6" fill="none" stroke="#bdbdbd" stroke-width="4.3"/><path d="M-7.6 -3.4H-2.8M2.8 -3.4H7.6" stroke="#000" stroke-width="0.9" opacity=".85"/></g><path d="M15.2 4.2L16.6 5.8M17.6 2.6L18.2 4.8M19.8 6.2L18.6 7.4" stroke="#bdbdbd" stroke-width="0.9" opacity=".6"/></svg>
<div class="t" style="left:896px;top:63px;font-size:17px;color:#c4c4c4;">1</div>
<svg style="left:947px;top:57px" width="28" height="28" viewBox="0 0 28 28" ><path d="M12.5 6.6A8 8 0 1 0 20.5 18" fill="none" stroke="#a4a4a4" stroke-width="4.2"/><path d="M11.4 2L17.8 5.2L12.4 10.8Z" fill="#a4a4a4"/><circle cx="13.2" cy="14.6" r="2.9" fill="#b81048"/><path d="M16.8 1.2L17.4 3.4M19.2 3L18.6 5.2M19.6 6.2L18.8 8" stroke="#c8a0b0" stroke-width="1" opacity=".8"/></svg>
<svg style="left:991.6px;top:58.3px" width="24" height="24" viewBox="0 0 24 24" ><g transform="translate(12 12) rotate(45)"><path d="M-5.2 -5.6V0.6A5.2 5.2 0 0 0 5.2 0.6V-5.6" fill="none" stroke="#bdbdbd" stroke-width="4.3"/><path d="M-7.6 -3.4H-2.8M2.8 -3.4H7.6" stroke="#000" stroke-width="0.9" opacity=".85"/></g><path d="M15.2 4.2L16.6 5.8M17.6 2.6L18.2 4.8M19.8 6.2L18.6 7.4" stroke="#bdbdbd" stroke-width="0.9" opacity=".6"/></svg>
<div class="t" style="left:1017.5px;top:63px;font-size:17px;color:#c4c4c4;letter-spacing:0.5px">10°</div>
<svg style="left:1086px;top:56px" width="28" height="30" viewBox="0 0 28 30" ><rect x="1.2" y="6.8" width="20.4" height="20" fill="none" stroke="#868686" stroke-width="1.3"/><rect x="1.2" y="17.6" width="9.4" height="9.2" fill="#8a8a8a"/><circle cx="6" cy="22.1" r="2.5" fill="#b01046"/><path d="M10.8 16.8L16.6 11.2" stroke="#b2b2b2" stroke-width="2.8"/><path d="M14.2 9.4L18.9 8.9L18.4 13.6Z" fill="#b2b2b2"/><path d="M20.2 2.4L20.8 4.8M22.4 3.6L22 5.8M24.4 6.6L22.6 7.2" stroke="#9a9a9a" stroke-width="0.9" opacity=".7"/></svg>
<svg style="left:1131.8px;top:58.3px" width="24" height="24" viewBox="0 0 24 24" ><g transform="translate(12 12) rotate(45)"><path d="M-5.2 -5.6V0.6A5.2 5.2 0 0 0 5.2 0.6V-5.6" fill="none" stroke="#bdbdbd" stroke-width="4.3"/><path d="M-7.6 -3.4H-2.8M2.8 -3.4H7.6" stroke="#000" stroke-width="0.9" opacity=".85"/></g><path d="M15.2 4.2L16.6 5.8M17.6 2.6L18.2 4.8M19.8 6.2L18.6 7.4" stroke="#bdbdbd" stroke-width="0.9" opacity=".6"/></svg>
<div class="t" style="left:1157px;top:63px;font-size:17px;color:#c4c4c4;letter-spacing:-0.3px">0.1</div>
<svg style="left:1223.4px;top:59.6px" width="28" height="24" viewBox="0 0 28 24" ><path d="M0.6 4.4H6.6L8.6 1.2H17.4L19.4 4.4H25.4V19.6H0.6Z" fill="#bcbcbc"/><circle cx="13.8" cy="11.3" r="4.8" fill="#101010"/><circle cx="13.8" cy="11.3" r="3.3" fill="#c4124f"/><rect x="2.6" y="1.6" width="2.6" height="1.6" fill="#8a8a8a"/><rect x="3.4" y="7" width="1.6" height="1.6" fill="#555"/></svg>
<div class="pill" style="left:869px;width:108px"></div>
<div class="pill" style="left:997px;width:132px"></div>
<svg style="left:875px;top:99px" width="24" height="24" viewBox="0 0 24 24" ><circle cx="12" cy="12" r="10.6" fill="none" stroke="#8a8a8a" stroke-width="1.5"/><path d="M12 1.4V22.6" stroke="#8a8a8a" stroke-width="1.4"/><path d="M11.8 3.6H17.6" stroke="#8a8a8a" stroke-width="1"/><path d="M11.8 6H20.4" stroke="#8a8a8a" stroke-width="1"/><path d="M11.8 8.4H21.8" stroke="#8a8a8a" stroke-width="1"/><path d="M11.8 10.8H22.4" stroke="#8a8a8a" stroke-width="1"/><path d="M11.8 13.2H22.4" stroke="#8a8a8a" stroke-width="1"/><path d="M11.8 15.6H21.8" stroke="#8a8a8a" stroke-width="1"/><path d="M11.8 18H20.4" stroke="#8a8a8a" stroke-width="1"/><path d="M11.8 20.4H17.6" stroke="#8a8a8a" stroke-width="1"/></svg>
<div class="t" style="left:906.5px;top:103px;font-size:17px;color:#909090;letter-spacing:0.55px">world</div>
<svg style="left:957px;top:108px" width="11" height="10" viewBox="0 0 11 10" ><path d="M0.5 0.5H10L5.2 9.5Z" fill="#454547"/></svg>
<svg style="left:983px;top:106px" width="10" height="10" viewBox="0 0 10 10" ><path d="M0.5 0.5V9.5L9.5 5Z" fill="#303032"/></svg>
<div class="t" style="left:1006px;top:102.5px;font-size:17px;color:#929292;letter-spacing:-0.15px">open scenes: 1</div>
<div class="a" style="left:1440px;top:50px;width:555px;height:1026px;background:#202022"></div>
<div class="a" style="left:1437px;top:50px;width:3px;height:1026px;background:#e6127c"></div>
<div class="a" style="left:1995px;top:50px;width:4px;height:1027px;background:#060606"></div>
<div class="a" style="left:1999px;top:0;width:1px;height:50px;background:#2c2c2e"></div>
<div class="a" style="left:1999px;top:50px;width:1px;height:1026px;background:#060606"></div>
<div class="a" style="left:1441px;top:52px;width:551px;height:56px;background:#1b1b1c"></div>
<div class="a" style="left:1440px;top:108px;width:555px;height:91px;background:#222224"></div>
<div class="a" style="left:1440px;top:199px;width:555px;height:2px;background:#0e0e0f"></div>
<div class="btn" style="left:1460px"></div>
<div class="t" style="left:1508px;top:143.68px;font-size:24px;color:#f0f0f0;transform-origin:0 0;transform:scaleX(0.9042);font-weight:bold;">OPEN</div>
<div class="btn" style="left:1638px"></div>
<div class="t" style="left:1675.7px;top:143.68px;font-size:24px;color:#f0f0f0;transform-origin:0 0;transform:scaleX(0.8463);font-weight:bold;">CREATE</div>
<div class="btn" style="left:1816px"></div>
<div class="t" style="left:1851.4px;top:143.68px;font-size:24px;color:#f0f0f0;transform-origin:0 0;transform:scaleX(0.9128);font-weight:bold;">ATTACH</div>
<div class="t" style="left:1710px;top:214px;font-size:17px;color:#e8e8e8;font-weight:bold;letter-spacing:0.4px">...</div>
<svg style="left:1632px;top:247px" width="22" height="27" viewBox="0 0 22 27" ><path d="M6.5 3.4Q11 0.6 15.5 3.4" fill="none" stroke="#303032" stroke-width="1.6"/><rect x="1" y="4.6" width="20" height="3" fill="#303032"/><path d="M2.2 8.6H19.8V26H2.2ZM7.4 11.5V23H9.6V11.5ZM12.4 11.5V23H14.6V11.5Z" fill="#303032" fill-rule="evenodd"/></svg>
<svg style="left:1665px;top:247px" width="26" height="27" viewBox="0 0 26 27" ><rect x="1" y="1" width="16" height="17" fill="none" stroke="#303032" stroke-width="1.8"/><rect x="8" y="9" width="16.5" height="16.5" fill="#202022" stroke="#303032" stroke-width="1.8"/><path d="M7 6.5L15 14.5" stroke="#303032" stroke-width="2.2"/><path d="M12.5 17.5L17.6 17.8L17 12.6Z" fill="#303032"/></svg>
<svg style="left:1725px;top:248px" width="26" height="26" viewBox="0 0 26 26" ><rect x="1.2" y="1.2" width="22.8" height="22.4" fill="none" stroke="#505052" stroke-width="1.7" stroke-dasharray="3.4 2.2"/></svg>
<svg style="left:1760px;top:247px" width="26" height="27" viewBox="0 0 26 27" ><rect x="1.2" y="1.2" width="16.4" height="15.6" fill="none" stroke="#505052" stroke-width="1.9"/><rect x="7.4" y="9.4" width="16.6" height="15.6" fill="#202022" stroke="#505052" stroke-width="1.7" stroke-dasharray="3.4 2.2"/></svg>
<svg style="left:1795px;top:247px" width="26" height="27" viewBox="0 0 26 27" ><rect x="2.2" y="2.4" width="21.2" height="21" fill="none" stroke="#505052" stroke-width="1.5" stroke-dasharray="3.4 2.2"/><rect x="0" y="0.2" width="4.6" height="4.6" fill="#505052"/><rect x="21" y="0.2" width="4.6" height="4.6" fill="#505052"/><rect x="0" y="21" width="4.6" height="4.6" fill="#505052"/><rect x="21" y="21" width="4.6" height="4.6" fill="#505052"/></svg>
<svg style="left:1830px;top:247px" width="26" height="27" viewBox="0 0 26 27" ><rect x="1.2" y="1.4" width="23" height="23" fill="none" stroke="#505052" stroke-width="1.7" stroke-dasharray="3.4 2.2"/><rect x="7.4" y="6.6" width="11.4" height="11.4" fill="none" stroke="#505052" stroke-width="1.5"/><rect x="10.6" y="9.8" width="8.4" height="8.4" fill="none" stroke="#505052" stroke-width="1.8"/></svg>
<svg style="left:1892px;top:250px" width="24" height="24" viewBox="0 0 24 24" ><path d="M11 4.6H1.2V22H21.6V13" fill="none" stroke="#303032" stroke-width="1.7"/><path d="M6.8 17.6L8.4 12.2L18.6 2L22.6 6L12.4 16Z" fill="#303032"/></svg>
<svg style="left:1926px;top:248px" width="24" height="25" viewBox="0 0 24 25" ><path d="M0.6 0.6H18.8L23.4 5V24.4H0.6Z" fill="#505052"/><rect x="5.2" y="0" width="13" height="7.8" fill="#202022"/><rect x="14" y="1.6" width="2.4" height="4.6" fill="#505052"/><rect x="3.8" y="14.8" width="16.4" height="7" fill="#202022"/></svg>
<svg style="left:1960px;top:248px" width="25" height="25" viewBox="0 0 25 25" ><path d="M0.6 0.6H18.8L23.4 5V24.4H0.6Z" fill="#505052"/><rect x="5.2" y="0" width="13" height="7.8" fill="#202022"/><rect x="14" y="1.6" width="2.4" height="4.6" fill="#505052"/><path d="M3.8 14.4H20.4M3.8 17H20.4M3.8 19.6H20.4M3.8 22.2H20.4" stroke="#202022" stroke-width="1.2"/></svg>
<div class="a" style="left:1440px;top:280px;width:555px;height:2px;background:#2a2a2c"></div>
<div class="a" style="left:1443px;top:282px;width:549px;height:37px;background:#1a1a1b"></div>
<div class="a" style="left:1440px;top:319px;width:555px;height:2px;background:#262628"></div>
<div class="t" style="left:1452.5px;top:287.11px;font-size:30px;color:#2f2f31;transform-origin:0 0;transform:scaleX(0.9472);">find...</div>
<div class="a" style="left:1445px;top:325px;width:530px;height:40px;background:#1a1a1c"></div>
<div class="a" style="left:1445px;top:366px;width:530px;height:39px;background:#19191b"></div>
<div class="a" style="left:1456px;top:365px;width:521px;height:1px;background:#232325"></div>
<svg style="left:1448px;top:339px" width="13" height="13" viewBox="0 0 13 13" ><path d="M0.4 0.4H12.4L6.4 12.4Z" fill="#e6127c"/></svg>
<svg style="left:1470.5px;top:334px" width="20" height="20" viewBox="0 0 20 20" ><path d="M10 1L19 5.6V14.6L10 19.4L1 14.6V5.6Z" fill="none" stroke="#858587" stroke-width="1.6" stroke-linejoin="round"/><path d="M1 5.6L10 10.4L19 5.6M10 10.4V19.4" fill="none" stroke="#858587" stroke-width="1.6"/><path d="M5.4 3.4L14.6 8.2V12" fill="none" stroke="#858587" stroke-width="1.5"/></svg>
<div class="t" style="left:1500.5px;top:333.31px;font-size:23.5px;color:#858587;transform-origin:0 0;transform:scaleX(0.9377);">scene/scene-pw5</div>
<svg style="left:1914px;top:333px" width="23" height="22" viewBox="0 0 23 22" ><path d="M2.4 8.8L10.4 5L20.8 7.6L12.8 11.6Z" fill="none" stroke="#e0e0e0" stroke-width="1.7" stroke-linejoin="round"/><path d="M2.4 8.8L12.8 11.6V20.4L2.6 15.4Z" fill="none" stroke="#e0e0e0" stroke-width="2" stroke-linejoin="round"/><path d="M2.6 12.1L12.6 16" stroke="#e0e0e0" stroke-width="1.8"/><path d="M12.8 11.6L20.8 7.6V15.2L12.8 20.4Z" fill="none" stroke="#e0e0e0" stroke-width="1.8" stroke-linejoin="round"/><path d="M15.6 15.6L18 14.2" stroke="#9a9a9a" stroke-width="1.4"/><path d="M8.8 0.6H13V4.6H15.2L10.9 9.4L6.6 4.6H8.8Z" fill="#e0e0e0" stroke="#1a1a1c" stroke-width="0.9"/></svg>
<svg style="left:1945px;top:334px" width="20" height="20" viewBox="0 0 20 20" ><circle cx="10" cy="10" r="9.4" fill="#2c2c2e"/><path d="M6 6L14 14M14 6L6 14" stroke="#1b1b1d" stroke-width="2.6"/></svg>
<svg style="left:1484px;top:374px" width="22" height="22" viewBox="0 0 22 22" ><circle cx="11" cy="11" r="9" fill="none" stroke="#e6127c" stroke-width="2"/><circle cx="11" cy="11" r="4.6" fill="#e6127c"/></svg>
<div class="t" style="left:1515.5px;top:373.91px;font-size:23.5px;color:#858587;transform-origin:0 0;transform:scaleX(0.9490);">entity.sdw</div>
<div class="t" style="left:1619px;top:379.76px;font-size:16px;color:#29292b;transform-origin:0 0;transform:scaleX(1.0963);">(42951770217)</div>
<div class="a" style="left:1440px;top:700px;width:555px;height:376px;background:#222224"></div>
<div class="a" style="left:1441px;top:699px;width:553px;height:1px;background:#2d2d2f"></div>
<div class="hdr" style="top:706px"></div>
<div class="hdr" style="top:756px"></div>
<svg style="left:1455px;top:719px" width="15" height="13" viewBox="0 0 15 13" ><path d="M1.5 1.5L13.5 11.5M13.5 1.5L1.5 11.5" stroke="#373739" stroke-width="3"/></svg>
<svg style="left:1455px;top:769px" width="15" height="13" viewBox="0 0 15 13" ><path d="M1.5 1.5L13.5 11.5M13.5 1.5L1.5 11.5" stroke="#373739" stroke-width="3"/></svg>
<svg style="left:1482px;top:716px" width="18" height="18" viewBox="0 0 18 18" ><circle cx="9.4" cy="9" r="7.7" fill="none" stroke="#39393b" stroke-width="1.7"/><path d="M9.4 5V13" stroke="#39393b" stroke-width="3.6"/></svg>
<svg style="left:1482px;top:766px" width="18" height="18" viewBox="0 0 18 18" ><circle cx="9.4" cy="9" r="7.7" fill="none" stroke="#39393b" stroke-width="1.7"/><path d="M5.4 9H13.4" stroke="#39393b" stroke-width="3"/></svg>
<div class="t" style="left:1510px;top:713.68px;font-size:24px;color:#8c8c8e;transform-origin:0 0;transform:scaleX(0.9238);">Transform</div>
<div class="t" style="left:1510px;top:763.48px;font-size:24px;color:#8c8c8e;transform-origin:0 0;transform:scaleX(0.8858);">Tiles</div>
<svg style="left:1881px;top:712px" width="27" height="26" viewBox="0 0 27 26" ><path d="M8 4.5H2V21H9.5" fill="none" stroke="#78787a" stroke-width="2"/><path d="M17.5 4.5H22.5V9" fill="none" stroke="#78787a" stroke-width="2"/><rect x="8.2" y="1" width="8.6" height="5.6" rx="1.6" fill="none" stroke="#78787a" stroke-width="1.8"/><circle cx="12.5" cy="3.4" r="1" fill="#78787a"/><path d="M11.5 10.5H19.5L24.6 15.5V25H11.5Z" fill="none" stroke="#78787a" stroke-width="2"/><path d="M15 17.5H21M15 21H21" stroke="#78787a" stroke-width="1.4"/></svg>
<svg style="left:1919px;top:712px" width="27" height="26" viewBox="0 0 27 26" ><path d="M8 4.5H2.5V23.5H20.5V17" fill="none" stroke="#343436" stroke-width="2"/><path d="M17 4.5H20.5V7" fill="none" stroke="#343436" stroke-width="2"/><rect x="7.6" y="1" width="8.2" height="5.6" rx="1.6" fill="none" stroke="#343436" stroke-width="1.8"/><path d="M9 19.5L10.5 14.5L20.8 5.2L24 8.6L13.8 18Z" fill="#343436"/></svg>
<svg style="left:1881px;top:762px" width="27" height="26" viewBox="0 0 27 26" ><path d="M8 4.5H2V21H9.5" fill="none" stroke="#78787a" stroke-width="2"/><path d="M17.5 4.5H22.5V9" fill="none" stroke="#78787a" stroke-width="2"/><rect x="8.2" y="1" width="8.6" height="5.6" rx="1.6" fill="none" stroke="#78787a" stroke-width="1.8"/><circle cx="12.5" cy="3.4" r="1" fill="#78787a"/><path d="M11.5 10.5H19.5L24.6 15.5V25H11.5Z" fill="none" stroke="#78787a" stroke-width="2"/><path d="M15 17.5H21M15 21H21" stroke="#78787a" stroke-width="1.4"/></svg>
<svg style="left:1919px;top:762px" width="27" height="26" viewBox="0 0 27 26" ><path d="M8 4.5H2.5V23.5H20.5V17" fill="none" stroke="#343436" stroke-width="2"/><path d="M17 4.5H20.5V7" fill="none" stroke="#343436" stroke-width="2"/><rect x="7.6" y="1" width="8.2" height="5.6" rx="1.6" fill="none" stroke="#343436" stroke-width="1.8"/><path d="M9 19.5L10.5 14.5L20.8 5.2L24 8.6L13.8 18Z" fill="#343436"/></svg>
<svg style="left:1956px;top:711px" width="28" height="28" viewBox="0 0 28 28" ><path d="M14.1 1.8L16.5 6H15V11.4H13.2V6H11.7Z" fill="#b4b4b6"/><path d="M14.1 26L16.5 21.8H15V16.4H13.2V21.8H11.7Z" fill="#b4b4b6"/><path d="M2.2 13.9L6.4 11.5V13H11.6V14.8H6.4V16.3Z" fill="#b4b4b6"/><path d="M26 13.9L21.8 11.5V13H16.6V14.8H21.8V16.3Z" fill="#b4b4b6"/><rect x="11.7" y="11.5" width="4.8" height="4.8" rx="1" fill="#9c1242"/><path d="M19 3L19.8 5.2M20.6 5.4L22.2 6.6M23.2 7L25 7.4" stroke="#b4b4b6" stroke-width="1" opacity=".7"/></svg>
<svg style="left:1956px;top:763px" width="28" height="24" viewBox="0 0 28 24" ><rect x="1" y="1.6" width="7.4" height="5.4" rx="1.2" fill="#8a8a8c"/><rect x="1" y="9" width="7.4" height="5.4" rx="1.2" fill="#8a8a8c"/><rect x="1" y="16.4" width="7.4" height="5.4" rx="1.2" fill="#8a8a8c"/><rect x="10.2" y="16.4" width="7.4" height="5.4" rx="1.2" fill="#8a8a8c"/><rect x="19.4" y="16.4" width="7.4" height="5.4" rx="1.2" fill="#8a8a8c"/><rect x="10.2" y="9" width="7.4" height="5.4" rx="1.2" fill="#b0134c"/></svg>
<div class="a" style="left:1446px;top:797px;width:544px;height:39px;background:#19191b"></div>
<div class="t" style="left:1535px;top:808px;font-size:17px;color:#dcdcdc;letter-spacing:-0.1px;text-shadow:0 0 0.6px #dcdcdc">tiles</div>
<div class="a" style="left:1575px;top:801px;width:324px;height:29px;box-sizing:border-box;background:#1c1c1d;border:1px solid #29292b"></div>
<div class="t" style="left:1580.7px;top:802.88px;font-size:24px;color:#666668;transform-origin:0 0;transform:scaleX(0.9334);">tiles/outside</div>
<div class="a" style="left:1911px;top:802px;width:28px;height:27px;background:#1b1b1c;box-sizing:border-box;border:1px solid #232325"></div>
<svg style="left:1919px;top:809px" width="13" height="13" viewBox="0 0 13 13" ><path d="M0.5 0.5V12.5L12.5 6.5Z" fill="#6c6c6e"/></svg>
<div class="a" style="left:1949px;top:802px;width:22px;height:27px;background:#1b1b1c;box-sizing:border-box;border:1px solid #232325"></div>
<svg style="left:1954px;top:808px" width="14" height="14" viewBox="0 0 14 14" ><path d="M8.6 2.6A4.7 4.7 0 1 1 2.6 4.4" fill="none" stroke="#58585a" stroke-width="1.3"/><path d="M8.4 0.6L11.2 1.2L9.2 4Z" fill="#58585a"/><path d="M8.6 2.4H11.2" stroke="#58585a" stroke-width="1.2"/></svg>
<div class="a" style="left:1977px;top:811px;width:8px;height:8px;border-radius:3.4px;background:#f0107a"></div>
<svg style="left:1801.8px;top:847.8px" width="15" height="23.5" viewBox="0 0 14 22" ><path d="M1.6 1.4V16.6L5.2 13.4L7.8 19.6L10.4 18.5L7.8 12.6L12.4 12.4Z" fill="#fff" stroke="#111" stroke-width="1.1" stroke-linejoin="round"/></svg>
<div class="a" style="left:0;top:1015px;width:1437px;height:61px;background:#121213"></div>
<div class="a" style="left:0;top:1016px;width:1437px;height:28px;background:linear-gradient(#1b1b1d,#222224 3px)"></div>
<div class="a" style="left:0;top:1046px;width:1437px;height:28px;background:#222224"></div>
<div class="a" style="left:0;top:1075px;width:2000px;height:50px;background:#222224"></div>
<div class="a" style="left:0;top:1074px;width:1995px;height:2px;background:#151516"></div>
<div class="a" style="left:0;top:50px;width:1px;height:1075px;background:#38383a"></div>
<div class="t" style="left:972.5px;top:1022.8px;font-size:17px;color:#7e7e80;letter-spacing:0.05px">Animations</div>
<div class="t" style="left:1005px;top:1052.8px;font-size:17px;color:#7e7e80;letter-spacing:-0.05px">Curves</div>
<svg style="left:1073px;top:1022.6px" width="22" height="18" viewBox="0 0 22 18" ><rect x="0" y="0" width="22" height="17" rx="1.2" fill="#525254"/><rect x="2.4" y="8.6" width="10.4" height="5.4" fill="#1c1c1e"/></svg>
<svg style="left:1103px;top:1020px" width="22" height="22" viewBox="0 0 22 22" ><circle cx="11" cy="11.3" r="9.2" fill="none" stroke="#525254" stroke-width="1.9"/><path d="M11 6.4V16" stroke="#525254" stroke-width="3.4"/></svg>
<svg style="left:1073px;top:1052.6px" width="22" height="18" viewBox="0 0 22 18" ><rect x="0" y="0" width="22" height="17" rx="1.2" fill="#525254"/><rect x="2.4" y="8.6" width="10.4" height="5.4" fill="#1c1c1e"/></svg>
<svg style="left:1103px;top:1050px" width="22" height="22" viewBox="0 0 22 22" ><circle cx="11" cy="11.3" r="9.2" fill="none" stroke="#525254" stroke-width="1.9"/><path d="M11 6.4V16" stroke="#525254" stroke-width="3.4"/></svg>
<svg style="left:1337px;top:1020px" width="21" height="21" viewBox="0 0 21 21" ><circle cx="10.5" cy="10.3" r="10" fill="#505052"/><path d="M6.6 6.4L14.4 14.2M14.4 6.4L6.6 14.2" stroke="#202022" stroke-width="2.4"/></svg>
<svg style="left:1372px;top:1020px" width="22" height="21" viewBox="0 0 22 21" ><path d="M0.4 0.2H16.6L20.8 4V20.2H0.4Z" fill="#4e4e50"/><rect x="4.2" y="0" width="11.6" height="6.6" fill="#202022"/><rect x="12.6" y="1.4" width="2" height="3.8" fill="#4e4e50"/><rect x="3" y="11.8" width="14.8" height="6.4" fill="#202022"/></svg>
<svg style="left:1408px;top:1022px" width="20" height="20" viewBox="0 0 20 20" ><path d="M10 1.4V18.6M1.4 10H18.6" stroke="#58585a" stroke-width="2.8"/></svg>
<div class="a" style="left:0;top:1124px;width:2000px;height:1px;background:#2c2c2e"></div>
<div class="a" style="left:1999px;top:1076px;width:1px;height:49px;background:#2c2c2e"></div>
<svg style="left:0px;top:1118px" width="7" height="7" viewBox="0 0 7 7" ><path d="M0.5 0A6.5 6.5 0 0 0 7 6.5" fill="none" stroke="#c01468" stroke-width="1.1"/></svg>
<svg style="left:1993px;top:1118px" width="7" height="7" viewBox="0 0 7 7" ><path d="M6.5 0A6.5 6.5 0 0 1 0 6.5" fill="none" stroke="#c01468" stroke-width="1.1"/></svg>
<div class="t" style="left:1215px;top:1092.5px;font-size:17px;color:#3c3c3e;letter-spacing:0.09px">version: 2025.1.1 context: `luxe.editor.world-editor` scopes: `.project .edit .scene .select .select.single`</div>
</body></html>
